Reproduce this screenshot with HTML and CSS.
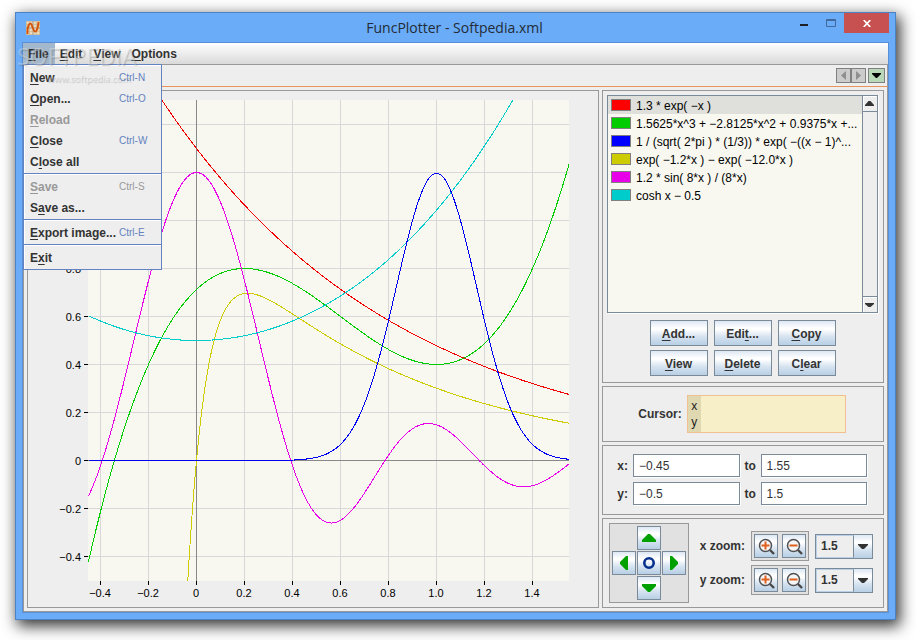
FILE: index.html
```html
<!DOCTYPE html>
<html lang="en">
<head>
<meta charset="utf-8">
<title>FuncPlotter - Softpedia.xml</title>
<link rel="stylesheet" href="styles.css">
</head>
<body>
<svg class="defs" aria-hidden="true">
  <symbol id="lens" viewBox="0 0 22 22">
    <circle cx="10.5" cy="10.5" r="6" fill="#f4f6f8" stroke="#505050" stroke-width="1.5"/>
    <path d="M15 15l4 4" stroke="#484848" stroke-width="2.4"/>
  </symbol>
  <symbol id="zoom-in" viewBox="0 0 22 22">
    <use href="#lens"/>
    <path d="M6.500 10.500h8M10.500 6.500v8" stroke="#e0601c" stroke-width="2"/>
  </symbol>
  <symbol id="zoom-out" viewBox="0 0 22 22">
    <use href="#lens"/>
    <path d="M6.500 10.500h8" stroke="#e0601c" stroke-width="2"/>
  </symbol>
</svg>

<div class="window">
  <header class="titlebar">
    <svg class="app-icon" viewBox="0 0 14 14" aria-hidden="true">
      <path d="M0 0h14v14H0z" fill="#e9d9bd"/>
      <path d="M0 .5h14M0 3.500h14M0 10.500h14M0 13.500h14M.5 0v14M3.500 0v14M10.500 0v14M13.500 0v14" stroke="#c9b18c" stroke-width=".6"/>
      <path d="M0 7h14M7 0v14" stroke="#a39b8c"/>
      <path d="M1.500 13V9C2 5 3 2.500 4.500 2.500S7 10 9 10.500 12 6 12.500 1" fill="none" stroke="#d8560c" stroke-width="2"/>
    </svg>
    <h1>FuncPlotter - Softpedia.xml</h1>
    <div class="window-buttons">
      <button class="minimize" aria-label="Minimize"><svg viewBox="0 0 8 2"><path d="M0 0h8v2H0z" fill="#1d2024"/></svg></button>
      <button class="maximize" aria-label="Maximize" disabled><svg viewBox="0 0 10 8"><path d="M.5 .5h9v7h-9zM0 1.500h10" fill="none" stroke="#41699c"/></svg></button>
      <button class="close" aria-label="Close"><svg viewBox="0 0 8 7"><path d="M.7 0l6.600 7M7.300 0L.7 7" stroke="#fff" stroke-width="1.700"/></svg></button>
    </div>
  </header>

  <div class="client">
    <nav class="menubar">
      <button class="open"><u>F</u>ile</button>
      <button><u>E</u>dit</button>
      <button><u>V</u>iew</button>
      <button><u>O</u>ptions</button>
    </nav>
    <div class="menu" role="menu">
      <div class="menu-group">
        <button role="menuitem"><span><u>N</u>ew</span><kbd>Ctrl-N</kbd></button>
        <button role="menuitem"><span><u>O</u>pen...</span><kbd>Ctrl-O</kbd></button>
        <button role="menuitem" disabled><span><u>R</u>eload</span></button>
        <button role="menuitem"><span><u>C</u>lose</span><kbd>Ctrl-W</kbd></button>
        <button role="menuitem"><span>C<u>l</u>ose all</span></button>
      </div>
      <div class="menu-group">
        <button role="menuitem" disabled><span><u>S</u>ave</span><kbd>Ctrl-S</kbd></button>
        <button role="menuitem"><span>S<u>a</u>ve as...</span></button>
      </div>
      <div class="menu-group">
        <button role="menuitem"><span><u>E</u>xport image...</span><kbd>Ctrl-E</kbd></button>
      </div>
      <div class="menu-group">
        <button role="menuitem"><span>E<u>x</u>it</span></button>
      </div>
    </div>
    <div class="watermark"><span class="brand">SOFTPEDIA</span><span class="site">www.softpedia.com</span></div>

    <div class="tabbar">
      <div class="tab-nav">
        <button disabled aria-label="Previous"><svg viewBox="0 0 13 13"><path d="M9 2v9L4 6.500z" fill="#8f8f8f"/></svg></button>
        <button disabled aria-label="Next"><svg viewBox="0 0 13 13"><path d="M4 2v9l5-4.500z" fill="#8f8f8f"/></svg></button>
      </div>
      <button class="tab-list" aria-label="Tab list"><svg viewBox="0 0 15 13"><path d="M3 4h9v1l-4 4H7L3 5z" fill="#000"/></svg></button>
    </div>

    <main class="content">
      <section class="panel plot">
        <svg id="plot" viewBox="0 0 570 516" role="img" aria-label="Function plot"></svg>
      </section>

      <aside class="sidebar">
        <section class="panel functions">
          <div class="listbox">
            <ul>
              <li class="selected"><i class="red"></i>1.3 * exp( −x )</li>
              <li><i class="green"></i>1.5625*x^3 + −2.8125*x^2 + 0.9375*x +...</li>
              <li><i class="blue"></i>1 / (sqrt( 2*pi ) * (1/3)) * exp( −((x − 1)^...</li>
              <li><i class="yellow"></i>exp( −1.2*x ) − exp( −12.0*x )</li>
              <li><i class="magenta"></i>1.2 * sin( 8*x ) / (8*x)</li>
              <li><i class="cyan"></i>cosh x − 0.5</li>
            </ul>
            <div class="scrollbar">
              <button aria-label="Scroll up"><svg viewBox="0 0 14 14"><path d="M2 9h9v-1L7.500 4h-2L2 8z" fill="#333"/></svg></button>
              <button aria-label="Scroll down"><svg viewBox="0 0 14 14"><path d="M2 5h9v1L7.500 9h-2L2 6z" fill="#333"/></svg></button>
            </div>
          </div>
          <div class="actions">
            <button class="btn"><span><u>A</u>dd...</span></button>
            <button class="btn"><span>Edi<u>t</u>...</span></button>
            <button class="btn"><span><u>C</u>opy</span></button>
            <button class="btn"><span><u>V</u>iew</span></button>
            <button class="btn"><span><u>D</u>elete</span></button>
            <button class="btn"><span>C<u>l</u>ear</span></button>
          </div>
        </section>

        <section class="panel cursor">
          <span>Cursor:</span>
          <div class="readout"><div><span>x</span><span>y</span></div></div>
        </section>

        <section class="panel range">
          <label for="x-min">x:</label><input id="x-min" value="−0.45"><label for="x-max">to</label><input id="x-max" value="1.55">
          <label for="y-min">y:</label><input id="y-min" value="−0.5"><label for="y-max">to</label><input id="y-max" value="1.5">
        </section>

        <section class="panel navigation">
          <div class="pad">
            <button class="btn up" aria-label="Up"><svg viewBox="0 0 22 22"><path d="M4 15h14v-2l-6-6h-2l-6 6z" fill="#00a000"/></svg></button>
            <button class="btn left" aria-label="Left"><svg viewBox="0 0 22 22"><path d="M15 4v14h-2l-6-6v-2l6-6z" fill="#00a000"/></svg></button>
            <button class="btn center" aria-label="Center"><svg viewBox="0 0 22 22"><circle cx="11" cy="11" r="4.700" fill="none" stroke="#06308e" stroke-width="2.600"/></svg></button>
            <button class="btn right" aria-label="Right"><svg viewBox="0 0 22 22"><path d="M7 4v14h2l6-6v-2l-6-6z" fill="#00a000"/></svg></button>
            <button class="btn down" aria-label="Down"><svg viewBox="0 0 22 22"><path d="M4 7h14v2l-6 6h-2l-6-6z" fill="#00a000"/></svg></button>
          </div>
          <div class="zooms">
            <label for="x-zoom">x zoom:</label>
            <div class="zoom-group">
              <button class="btn" aria-label="Zoom in x"><svg><use href="#zoom-in"/></svg></button>
              <button class="btn" aria-label="Zoom out x"><svg><use href="#zoom-out"/></svg></button>
            </div>
            <div class="combo"><select id="x-zoom"><option>1.5</option></select><svg viewBox="0 0 18 23"><path d="M4 9h10v1l-4 4H8l-4-4z" fill="#333"/></svg></div>
            <label for="y-zoom">y zoom:</label>
            <div class="zoom-group">
              <button class="btn" aria-label="Zoom in y"><svg><use href="#zoom-in"/></svg></button>
              <button class="btn" aria-label="Zoom out y"><svg><use href="#zoom-out"/></svg></button>
            </div>
            <div class="combo"><select id="y-zoom"><option>1.5</option></select><svg viewBox="0 0 18 23"><path d="M4 9h10v1l-4 4H8l-4-4z" fill="#333"/></svg></div>
          </div>
        </section>
      </aside>
    </main>
  </div>
</div>
<script src="plot.js"></script>
</body>
</html>
```
FILE: styles.css
```css
* { box-sizing: border-box; }

html { height: 100%; }

body {
  display: flex;
  height: 100%;
  margin: 0;
  padding: 12px 20px 20px 15px;
  overflow: hidden;
  background: #fff;
  color: #333;
  font: 12px/14px "Liberation Sans", Arial, sans-serif;
}

button, input, select {
  margin: 0;
  padding: 0;
  border: 0;
  border-radius: 0;
  background: none;
  color: inherit;
  font: inherit;
}

button svg { display: block; }
u { text-underline-offset: 2px; text-decoration-thickness: 1px; text-decoration-skip-ink: none; }
.defs { position: absolute; width: 0; height: 0; }

/* window frame */
.window {
  flex: 1;
  display: flex;
  flex-direction: column;
  padding: 0 6px 6px;
  border: 1px solid #4a82c4;
  background: #6aacf8;
  box-shadow: 3px 5px 14px 1px rgba(0, 0, 0, .8);
}

.titlebar {
  display: grid;
  grid-template-columns: 1fr auto 1fr;
  align-items: center;
  height: 29px;
}

.app-icon { width: 14px; height: 14px; margin-left: 4px; }

h1 {
  margin: 0;
  padding-right: 2px;
  color: #222b36;
  font: 14px/20px "Open Sans", "Noto Sans", sans-serif;
}

.window-buttons { display: flex; align-self: start; justify-content: flex-end; height: 20px; }
.window-buttons button { display: grid; place-items: center; width: 27px; }
.window-buttons .minimize { padding-top: 4px; }
.window-buttons .close { width: 45px; background: #c75050; }
.minimize svg { width: 8px; height: 2px; }
.maximize svg { width: 10px; height: 8px; }
.close svg { width: 8px; height: 7px; }

.client {
  position: relative;
  flex: 1;
  display: flex;
  flex-direction: column;
  border: 1px solid #588fd6;
  background: #eee;
}

/* menus */
.menubar {
  display: flex;
  height: 22px;
  border-bottom: 1px solid #999;
  background: linear-gradient(#fff, #dadada);
  font-weight: bold;
}
.menubar button { padding: 0 6px 0 5px; }
.menubar .open { background: #a3b8cc; }

.menu {
  position: absolute;
  z-index: 2;
  top: 21px;
  left: 0;
  width: 139px;
  border: 1px solid #6382bf;
  background: #eee;
  box-shadow: inset 1px 1px 0 #fff;
}
.menu-group { padding: 2px 0 1px; }
.menu-group + .menu-group { border-top: 1px solid #6382bf; box-shadow: inset 1px 1px 0 #fff; }
.menu button {
  display: grid;
  grid-template-columns: 89px 1fr;
  align-items: center;
  width: 100%;
  height: 21px;
  padding-left: 6px;
  font-weight: bold;
  text-align: left;
  white-space: nowrap;
}
.menu kbd { color: #6382bf; font: 10px/14px "Liberation Sans", Arial, sans-serif; }
.menu button:disabled, .menu button:disabled kbd { color: #999; }

.watermark {
  position: absolute;
  z-index: 3;
  top: 2px;
  left: -6px;
  display: flex;
  flex-direction: column;
  color: rgba(255, 255, 255, .3);
  font-family: "Open Sans", sans-serif;
  text-shadow: 1px 1px 1px rgba(90, 90, 90, .3);
  pointer-events: none;
}
.brand { font-size: 23px; line-height: 22px; }
.site { padding: 5px 0 0 30px; font-family: "Noto Sans", sans-serif; font-size: 9px; line-height: 14px; }

/* tab bar */
.tabbar {
  display: flex;
  justify-content: flex-end;
  gap: 2px;
  height: 22px;
  padding: 3px 2px 0 0;
  border-right: 1px solid #999;
  border-bottom: 1px solid #e8935a;
}
.tab-nav { display: flex; }
.tabbar button { width: 15px; height: 15px; border: 1px solid #808080; background: #ccc; }
.tabbar .tab-list { width: 17px; background: #b8d8b8; }

/* content */
.content {
  flex: 1;
  display: grid;
  grid-template-columns: 1fr 282px;
  gap: 3px;
  padding: 3px;
  border: solid #999;
  border-width: 0 1px 1px;
}
.panel { border: 1px solid #999; }
.plot { min-width: 0; min-height: 0; }
.plot svg { display: block; width: 100%; height: 100%; }
.plot text { fill: #000; font: 11px "Liberation Sans", Arial, sans-serif; }

.sidebar { display: flex; flex-direction: column; gap: 3px; }

.functions { display: flex; flex: 1; flex-direction: column; gap: 7px; padding: 4px 5px 6px 4px; }
.listbox {
  display: flex;
  flex: 1;
  border: 1px solid #7a8a99;
  background: #f8f8f0;
  box-shadow: 1px 1px 0 #fff;
  color: #000;
}
.listbox ul { flex: 1; min-width: 0; margin: 0; padding: 0; list-style: none; white-space: nowrap; }
.listbox li { display: flex; align-items: center; gap: 5px; height: 18px; padding: 1px 0 0 3px; }
.listbox li.selected { background: #dfe0db; }
.listbox i { width: 20px; height: 12px; margin-bottom: 1px; border: 1px solid #808080; }
.red { background: #f00; }
.green { background: #00cc00; }
.blue { background: #00f; }
.yellow { background: #cc0; }
.magenta { background: #e800e8; }
.cyan { background: #0cc; }

.scrollbar {
  display: flex;
  flex-direction: column;
  justify-content: space-between;
  width: 15px;
  border-left: 1px solid #7a8a99;
  background: #eee;
}
.scrollbar button { height: 16px; border-bottom: 1px solid #7a8a99; box-shadow: inset 1px 1px 0 #fff; }
.scrollbar button:last-child { border-top: 1px solid #7a8a99; border-bottom: 0; }
.scrollbar svg { width: 14px; height: 14px; }

.btn {
  display: grid;
  place-items: center;
  border: 1px solid #7a8a99;
  background: linear-gradient(#dde8f3, #fff 30%, #fff 35%, #d6e3f0 65%, #b8cfe5);
  font-weight: bold;
}
.btn svg { width: 22px; height: 22px; }
.actions { display: grid; grid-template-columns: repeat(3, 58px); gap: 4px 6px; justify-content: center; }
.actions .btn { height: 26px; padding-top: 1px; }

.cursor { display: flex; align-items: center; justify-content: center; gap: 5px; height: 56px; padding-right: 2px; font-weight: bold; }
.readout { width: 159px; height: 38px; border: 1px solid #f0c090; background: #f7efc8; color: #222; font-weight: normal; }
.readout div { display: flex; flex-direction: column; justify-content: center; gap: 2px; width: 13px; height: 100%; background: #e0d8b0; text-align: center; }

.range {
  display: grid;
  grid-template-columns: 14px 1fr 11px 1fr;
  align-items: center;
  gap: 5px;
  height: 70px;
  padding: 8px 16px 9px 11px;
  font-weight: bold;
}
.range label { text-align: right; }
.range input {
  min-width: 0;
  width: 100%;
  height: 23px;
  padding: 1px 5px 0;
  border: 1px solid #7a8a99;
  background: #fff;
  box-shadow: 1px 1px 0 #fff;
  font-weight: normal;
}

.navigation { display: flex; align-items: center; justify-content: space-between; height: 90px; padding: 0 10px 0 6px; font-weight: bold; }
.pad {
  display: grid;
  grid-template: "a up b" 24px "left center right" 24px "c down d" 24px / 24px 24px 24px;
  gap: 1px;
  padding: 2px;
  border: 1px solid #999;
  background: #e1e1e1;
}
.up { grid-area: up; }
.left { grid-area: left; }
.center { grid-area: center; }
.right { grid-area: right; }
.down { grid-area: down; }

.zooms { display: grid; grid-template-columns: auto 58px 58px; align-items: center; gap: 4px 6px; }
.zoom-group { display: flex; gap: 4px; padding: 2px; border: 1px solid #999; background: #e1e1e1; }
.zoom-group .btn { width: 24px; height: 24px; }
.combo {
  display: grid;
  grid-template-columns: 1fr 18px;
  height: 25px;
  border: 1px solid #7a8a99;
  background: linear-gradient(#dde8f3, #fff 30%, #fff 35%, #d6e3f0 65%, #b8cfe5);
}
.combo select { grid-area: 1 / 1 / 2 / 3; appearance: none; margin-right: 18px; padding-left: 4px; border: 1px solid #b8cfe5; border-right-color: #7a8a99; background: #eee; font-weight: bold; }
.combo svg { grid-area: 1 / 2 / 2 / 3; width: 18px; height: 23px; pointer-events: none; }
```
FILE: plot.js
```js
// Graph area inside the drawing, one unit of either axis is 240 px.
const area = { left: 60, top: 9, size: 481 };
const unit = 240;
const originX = 168;
const originY = 369;
const svg = document.getElementById("plot");

const functions = [
  ["#f00000", x => 1.3 * Math.exp(-x)],
  ["#00cc00", x => 1.5625 * x ** 3 - 2.8125 * x ** 2 + 0.9375 * x + 0.7125],
  ["#cccc00", x => Math.exp(-1.2 * x) - Math.exp(-12 * x)],
  ["#e800e8", x => (x === 0 ? 1.2 : 1.2 * Math.sin(8 * x) / (8 * x))],
  ["#00cccc", x => Math.cosh(x) - 0.5],
  ["#0000f0", x => 3 / Math.sqrt(2 * Math.PI) * Math.exp(-18 * (x - 1) ** 2)]
];

function add(name, attributes, content) {
  const node = document.createElementNS("http://www.w3.org/2000/svg", name);
  for (const key in attributes) node.setAttribute(key, attributes[key]);
  if (content) node.textContent = content;
  svg.append(node);
  return node;
}

function rect(x, y, width, height, fill) {
  add("rect", { x, y, width, height, fill });
}

function label(step) {
  if (step === 0) return "0";
  return (step / 5).toFixed(1).replace("-", "−");
}

rect(area.left, area.top, area.size, area.size, "#f8f8f0");
for (let i = -2; i <= 7; i++) {
  const x = originX + i * 48;
  rect(x, area.top, 1, area.size, "#d8d8d8");
  rect(x, area.top + area.size, 1, 4, "#000");
  add("text", { x, y: 506, "text-anchor": "middle" }, label(i));
}
for (let i = -2; i <= 7; i++) {
  const y = originY - i * 48;
  rect(area.left, y, area.size, 1, "#d8d8d8");
  rect(area.left - 4, y, 4, 1, "#000");
  add("text", { x: 53, y: y + 5, "text-anchor": "end" }, label(i));
}
rect(originX, area.top, 1, area.size, "#888");
rect(area.left, originY, area.size, 1, "#888");

const clip = add("clipPath", { id: "area" });
add("rect", { x: area.left, y: area.top, width: area.size, height: area.size });
clip.append(svg.lastChild);

for (const [stroke, f] of functions) {
  const points = [];
  for (let px = area.left; px <= area.left + area.size; px++) {
    const y = originY + 0.5 - unit * f((px - originX) / unit);
    if (y > -300 && y < 900) points.push((px + 0.5) + "," + y.toFixed(1));
  }
  add("polyline", {
    points: points.join(" "), fill: "none", stroke,
    "clip-path": "url(#area)", "shape-rendering": "crispEdges"
  });
}
```
